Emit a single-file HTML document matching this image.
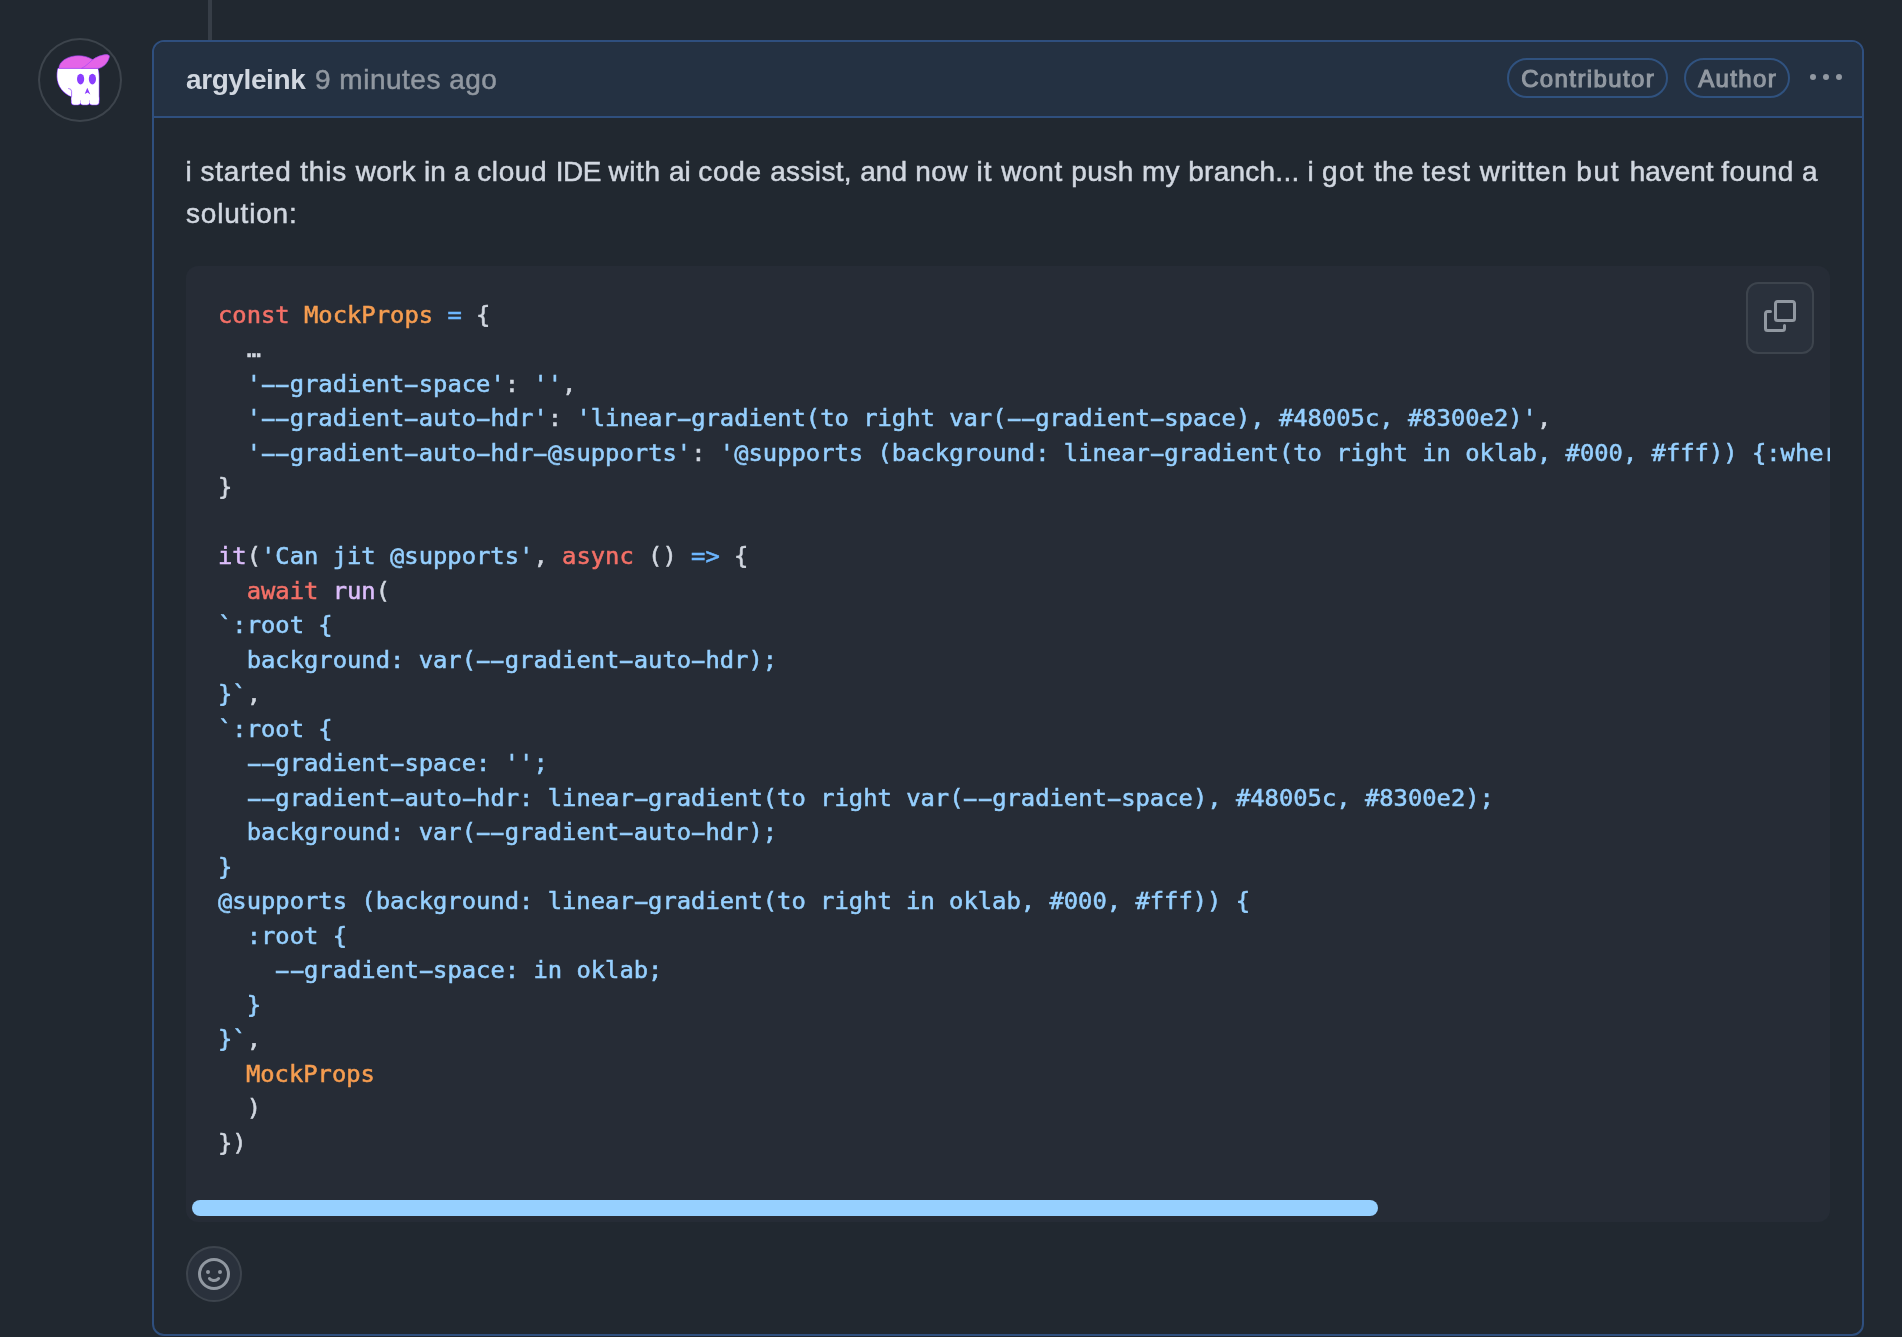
<!DOCTYPE html>
<html lang="en">
<head>
<meta charset="utf-8">
<title>Comment</title>
<style>
*{box-sizing:border-box;margin:0;padding:0}
html,body{width:1902px;height:1337px;overflow:hidden;background:#212830}
body{position:relative;font-family:"Liberation Sans",sans-serif;color:#d1d7e0}
.abs{position:absolute}
#tl{left:208px;top:0;width:4px;height:40px;background:#373e47}
#avatar{left:40px;top:40px;width:80px;height:80px;border-radius:50%;box-shadow:0 0 0 2px #3d444c;overflow:hidden}
#box{left:152px;top:40px;width:1712px;height:1296px;border:2px solid #2f4f7e;border-radius:12px}
#hdr{left:154px;top:42px;width:1708px;height:76px;background:#243142;border-bottom:2px solid #2f4f7e;border-radius:10px 10px 0 0}
.t{will-change:transform;white-space:nowrap;line-height:42px;font-size:28px}
#user{left:186px;top:59px;font-weight:bold;letter-spacing:-0.4px}
#time{left:315px;top:59px;color:#9198a1;letter-spacing:0.5px;-webkit-text-stroke:0.5px #9198a1}
.pill{will-change:transform;top:58px;height:40px;border:2px solid #30527f;border-radius:20px;color:#9198a1;font-size:24px;line-height:38px;text-align:center;white-space:nowrap;-webkit-text-stroke:1.1px #9198a1;letter-spacing:1.4px;padding-left:1.4px}
#p1{left:1507px;width:161px}
#p2{left:1684px;width:106px}
#kebab{left:1810px;top:62px;width:32px;height:32px}
#l1{left:0;top:151px;width:1902px;height:42px;-webkit-text-stroke:0.5px #d1d7e0}
#l1 span{position:absolute;top:0}
#l2{left:186px;top:193px;letter-spacing:0.8px;-webkit-text-stroke:0.5px #d1d7e0}
#code{left:186px;top:266px;width:1644px;height:956px;background:#262c36;border-radius:12px;overflow:hidden}
#code pre{position:absolute;left:32px;top:31px;padding-top:0.5px;font-family:"DejaVu Sans Mono","Liberation Mono",monospace;font-size:23.8px;line-height:34.5px;color:#d1d7e0;white-space:pre;letter-spacing:0.008px;will-change:transform;-webkit-text-stroke-width:0.55px}
#code i{font-style:normal;display:inline-block;transform:scaleX(1.95)}
.k{color:#f47067}.v{color:#f69d50}.c{color:#6cb6ff}.s{color:#96d0ff}.e{color:#dcbdfb}
#copy{left:1746px;top:282px;width:68px;height:72px;background:#2a313c;border:2px solid #3d444d;border-radius:12px}
#copy svg{position:absolute;left:16px;top:16px}
#sb{left:192px;top:1200px;width:1186px;height:16px;border-radius:8px;background:#96d0ff}
#smile{left:186px;top:1246px;width:56px;height:56px;border-radius:50%;background:#2a313c;border:2px solid #3d444d}
#smile svg{position:absolute;left:10px;top:10px}
</style>
</head>
<body>
<div id="tl" class="abs"></div>
<div id="avatar" class="abs">
<svg width="80" height="80" viewBox="40 40 80 80">
<g stroke="#8b3dff" stroke-width="1.3" stroke-linejoin="round" fill="#fff">
<path d="M58.1 68.6L97.7 68.6C98.5 71.5 98.8 74 98.8 76.7L98.8 100.3L71.6 100.3L71.6 96.4C64 94 57.5 86 57.3 77C57.2 73.5 57.5 71 58.1 68.6Z"/>
<rect x="71.6" y="96" width="8.7" height="8.7" rx="2.4"/>
<rect x="80.5" y="96" width="8.9" height="8.7" rx="2.4"/>
<rect x="89.6" y="96" width="9.2" height="8.7" rx="2.4"/>
</g>
<path fill="#fff" d="M58.1 68.6L97.7 68.6C98.5 71.5 98.8 74 98.8 76.7L98.8 100.3L71.6 100.3L71.6 96.4C64 94 57.5 86 57.3 77C57.2 73.5 57.5 71 58.1 68.6Z"/>
<rect fill="#fff" x="71.6" y="96" width="8.7" height="8.7" rx="2.4"/>
<rect fill="#fff" x="80.5" y="96" width="8.9" height="8.7" rx="2.4"/>
<rect fill="#fff" x="89.6" y="96" width="9.2" height="8.7" rx="2.4"/>
<path fill="none" stroke="#8b3dff" stroke-width="0.7" stroke-linecap="round" d="M68.6 88.5Q71.4 88.6 71.6 91.2L71.6 96.4"/>
<path fill="#e464e8" stroke="#9a44f5" stroke-width="0.6" d="M58.9 68.4A19.6 12.7 0 0 1 98.1 68.4Z"/>
<path fill="#e464e8" stroke="#9a44f5" stroke-width="0.6" stroke-linejoin="round" d="M81.6 68.4C86 66 90 62 92.1 60.1C96 57 102 54.5 107 54.6C109.5 54.8 109.8 56.5 109.1 57.8C108 62 104.5 66.5 99.8 68.1L97.4 68.4Z"/>
<ellipse cx="80.6" cy="79.1" rx="3.6" ry="5.3" fill="#8b3dff"/>
<ellipse cx="92.4" cy="79.1" rx="3.6" ry="5.3" fill="#8b3dff"/>
<path fill="#8b3dff" d="M87.3 87.7L90.3 94.5L87.6 92.4L84.7 94.1Z"/>
</svg>
</div>
<div id="box" class="abs"></div>
<div id="hdr" class="abs"></div>
<div id="user" class="abs t">argyleink</div>
<div id="time" class="abs t">9 minutes ago</div>
<div id="p1" class="abs pill">Contributor</div>
<div id="p2" class="abs pill">Author</div>
<svg id="kebab" class="abs" viewBox="0 0 16 16" fill="#9198a1"><path d="M8 9a1.5 1.5 0 1 0 0-3 1.5 1.5 0 0 0 0 3ZM1.5 9a1.5 1.5 0 1 0 0-3 1.5 1.5 0 0 0 0 3Zm13 0a1.5 1.5 0 1 0 0-3 1.5 1.5 0 0 0 0 3Z"/></svg>
<div id="l1" class="abs t"><span style="left:185.48px;letter-spacing:0.497px">i</span> <span style="left:200.47px;letter-spacing:0.783px">started</span> <span style="left:300.13px;letter-spacing:0.861px">this</span> <span style="left:355.79px;letter-spacing:0.236px">work</span> <span style="left:423.88px;letter-spacing:0.168px">in</span> <span style="left:453.96px;letter-spacing:-0.08px">a</span> <span style="left:477.16px;letter-spacing:0.631px">cloud</span> <span style="left:555.67px;letter-spacing:-0.436px">IDE</span> <span style="left:608.39px;letter-spacing:0.598px">with</span> <span style="left:668.96px;letter-spacing:-0.059px">ai</span> <span style="left:698.36px;letter-spacing:0.66px">code</span> <span style="left:770.16px;letter-spacing:0.357px">assist,</span> <span style="left:860.16px;letter-spacing:0.133px">and</span> <span style="left:915.19px;letter-spacing:0.558px">now</span> <span style="left:976.58px;letter-spacing:0.978px">it</span> <span style="left:1001.29px;letter-spacing:0.603px">wont</span> <span style="left:1071.25px;letter-spacing:0.429px">push</span> <span style="left:1141.89px;letter-spacing:0.415px">my</span> <span style="left:1188.25px;letter-spacing:0.25px">branch...</span> <span style="left:1307.48px;letter-spacing:0.299px">i</span> <span style="left:1322.07px;letter-spacing:1.312px">got</span> <span style="left:1374.03px;letter-spacing:0.299px">the</span> <span style="left:1421.93px;letter-spacing:0.989px">test</span> <span style="left:1479.79px;letter-spacing:0.763px">written</span> <span style="left:1576.15px;letter-spacing:1.715px">but</span> <span style="left:1629.71px;letter-spacing:-0.059px">havent</span> <span style="left:1721.15px;letter-spacing:0.508px">found</span> <span style="left:1802.06px;letter-spacing:0.5px">a</span></div>
<div id="l2" class="abs t">solution:</div>
<div id="code" class="abs"><pre><span class="k">const</span> <span class="v">MockProps</span> <span class="c">=</span> {
  …
  <span class="s">'<i>-</i><i>-</i>gradient<i>-</i>space'</span>: <span class="s">''</span>,
  <span class="s">'<i>-</i><i>-</i>gradient<i>-</i>auto<i>-</i>hdr'</span>: <span class="s">'linear<i>-</i>gradient(to right var(<i>-</i><i>-</i>gradient<i>-</i>space), #48005c, #8300e2)'</span>,
  <span class="s">'<i>-</i><i>-</i>gradient<i>-</i>auto<i>-</i>hdr<i>-</i>@supports'</span>: <span class="s">'@supports (background: linear<i>-</i>gradient(to right in oklab, #000, #fff)) {:where</span>
}

<span class="e">it</span>(<span class="s">'Can jit @supports'</span>, <span class="k">async</span> () <span class="c">=&gt;</span> {
  <span class="k">await</span> <span class="e">run</span>(
<span class="s">`:root {</span>
<span class="s">  background: var(<i>-</i><i>-</i>gradient<i>-</i>auto<i>-</i>hdr);</span>
<span class="s">}`</span>,
<span class="s">`:root {</span>
<span class="s">  <i>-</i><i>-</i>gradient<i>-</i>space: '';</span>
<span class="s">  <i>-</i><i>-</i>gradient<i>-</i>auto<i>-</i>hdr: linear<i>-</i>gradient(to right var(<i>-</i><i>-</i>gradient<i>-</i>space), #48005c, #8300e2);</span>
<span class="s">  background: var(<i>-</i><i>-</i>gradient<i>-</i>auto<i>-</i>hdr);</span>
<span class="s">}</span>
<span class="s">@supports (background: linear<i>-</i>gradient(to right in oklab, #000, #fff)) {</span>
<span class="s">  :root {</span>
<span class="s">    <i>-</i><i>-</i>gradient<i>-</i>space: in oklab;</span>
<span class="s">  }</span>
<span class="s">}`</span>,
  <span class="v" style="margin-left:-0.8px">MockProps</span>
  )
})</pre></div>
<div id="copy" class="abs"><svg width="32" height="32" viewBox="0 0 16 16" fill="#9198a1"><path d="M0 6.75C0 5.784.784 5 1.75 5h1.5a.75.75 0 0 1 0 1.5h-1.5a.25.25 0 0 0-.25.25v7.5c0 .138.112.25.25.25h7.5a.25.25 0 0 0 .25-.25v-1.5a.75.75 0 0 1 1.5 0v1.5A1.75 1.75 0 0 1 9.25 16h-7.5A1.75 1.75 0 0 1 0 14.25Z"/><path d="M5 1.75C5 .784 5.784 0 6.75 0h7.5C15.216 0 16 .784 16 1.75v7.5A1.75 1.75 0 0 1 14.25 11h-7.5A1.75 1.75 0 0 1 5 9.25Zm1.75-.25a.25.25 0 0 0-.25.25v7.5c0 .138.112.25.25.25h7.5a.25.25 0 0 0 .25-.25v-7.5a.25.25 0 0 0-.25-.25Z"/></svg></div>
<div id="sb" class="abs"></div>
<div id="smile" class="abs"><svg width="32" height="32" viewBox="0 0 16 16" fill="#9198a1"><path d="M8 0a8 8 0 1 1 0 16A8 8 0 0 1 8 0ZM1.5 8a6.5 6.5 0 1 0 13 0 6.5 6.5 0 0 0-13 0Zm3.82 1.636a.75.75 0 0 1 1.038.175l.007.009c.103.118.22.222.35.31.264.178.683.37 1.285.37.602 0 1.02-.192 1.285-.371.13-.088.247-.192.35-.31l.007-.008a.75.75 0 0 1 1.222.87l-.022-.015c.02.013.021.015.021.015v.001l-.001.002-.002.003-.005.007-.014.019a2.066 2.066 0 0 1-.184.213c-.16.166-.338.316-.53.445-.63.418-1.37.638-2.127.629-.946 0-1.652-.308-2.126-.63a3.331 3.331 0 0 1-.715-.657l-.014-.02-.005-.006-.002-.003v-.002h-.001l.613-.432-.614.43a.75.75 0 0 1 .183-1.044ZM12 7a1 1 0 1 1-2 0 1 1 0 0 1 2 0ZM5 8a1 1 0 1 1 0-2 1 1 0 0 1 0 2Z"/></svg></div>
</body>
</html>
